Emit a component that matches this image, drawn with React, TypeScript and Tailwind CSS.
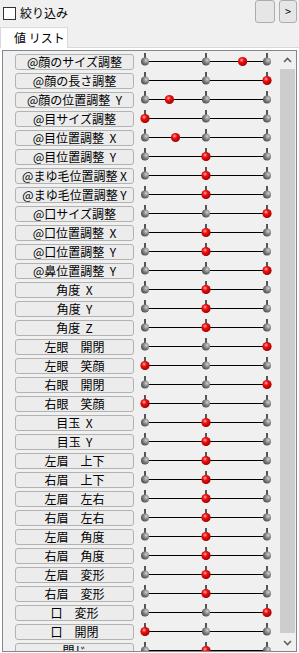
import React from "react";

type Row = { label: string; pos: number };

const rows: Row[] = [
  { label: "@顔のサイズ調整", pos: 0.8 },
  { label: "@顔の長さ調整", pos: 1 },
  { label: "@顔の位置調整  Y", pos: 0.2 },
  { label: "@目サイズ調整", pos: 0 },
  { label: "@目位置調整  X", pos: 0.25 },
  { label: "@目位置調整  Y", pos: 0.5 },
  { label: "@まゆ毛位置調整 X", pos: 0.5 },
  { label: "@まゆ毛位置調整 Y", pos: 0.5 },
  { label: "@口サイズ調整", pos: 1 },
  { label: "@口位置調整  X", pos: 0.5 },
  { label: "@口位置調整  Y", pos: 0.5 },
  { label: "@鼻位置調整  Y", pos: 1 },
  { label: "角度  X", pos: 0.5 },
  { label: "角度  Y", pos: 0.5 },
  { label: "角度  Z", pos: 0.5 },
  { label: "左眼　開閉", pos: 1 },
  { label: "左眼　笑顔", pos: 0 },
  { label: "右眼　開閉", pos: 1 },
  { label: "右眼　笑顔", pos: 0 },
  { label: "目玉  X", pos: 0.5 },
  { label: "目玉  Y", pos: 0.5 },
  { label: "左眉　上下", pos: 0.5 },
  { label: "右眉　上下", pos: 0.5 },
  { label: "左眉　左右", pos: 0.5 },
  { label: "右眉　左右", pos: 0.5 },
  { label: "左眉　角度", pos: 0.5 },
  { label: "右眉　角度", pos: 0.5 },
  { label: "左眉　変形", pos: 0.5 },
  { label: "右眉　変形", pos: 0.5 },
  { label: "口　変形", pos: 1 },
  { label: "口　開閉", pos: 0 },
  { label: "閉じ", pos: 0.5 },
];

const X0 = 7;
const X1 = 129;

function Slider({ pos, id }: { pos: number; id: number }) {
  const knobs = [X0, (X0 + X1) / 2, X1];
  const vx = X0 + (X1 - X0) * pos;
  return (
    <svg width="138" height="19" viewBox="0 0 138 19" className="block">
      <defs>
        <radialGradient id={`g${id}`} cx="0.65" cy="0.35" r="0.75">
          <stop offset="0" stopColor="#d0d0d0" />
          <stop offset="0.5" stopColor="#808080" />
          <stop offset="1" stopColor="#444" />
        </radialGradient>
        <radialGradient id={`r${id}`} cx="0.4" cy="0.35" r="0.7">
          <stop offset="0" stopColor="#ffb0b0" />
          <stop offset="0.35" stopColor="#f01010" />
          <stop offset="1" stopColor="#9a0000" />
        </radialGradient>
      </defs>
      <line x1={X0} y1="9.5" x2={X1} y2="9.5" stroke="#000" strokeWidth="1" />
      {knobs.map((k) => (
        <g key={k}>
          <line x1={k} y1="1" x2={k} y2="6" stroke="#555" strokeWidth="2" />
          <circle cx={k} cy="9.5" r="4" fill={`url(#g${id})`} />
        </g>
      ))}
      <circle cx={vx} cy="9.5" r="4.6" fill={`url(#r${id})`} />
    </svg>
  );
}

export default function App() {
  return (
    <div
      className="w-[299px] h-[653px] bg-[#f0f0f0] overflow-hidden flex flex-col text-black"
      style={{ fontFamily: "'Noto Sans CJK JP', 'Liberation Sans', sans-serif" }}
    >
      <div className="h-[27px] flex items-start shrink-0">
        <label className="flex items-center gap-[4px] pl-[3px] pt-[5px] text-[12px] leading-[16px]">
          <span className="w-[13px] h-[13px] border border-[#333] bg-white" />
          絞り込み
        </label>
        <div className="ml-auto flex gap-[4px] pr-[2px]">
          <button className="w-[20px] h-[23px] rounded-[3px] border border-[#adadad] bg-[#e6e6e6]" />
          <button className="w-[18px] h-[23px] rounded-[3px] border border-[#adadad] bg-[#e6e6e6] text-[11px] leading-none">
            &gt;
          </button>
        </div>
      </div>

      <div className="h-[20px] flex shrink-0">
        <div className="w-[68px] h-[21px] bg-white border border-b-0 border-[#d9d9d9] text-[12px] leading-[19px] pl-[13px] z-10">
          値 リスト
        </div>
      </div>

      <div className="flex-1 bg-white border-t border-[#d9d9d9] pt-[2px] px-[2px] pb-[1px] flex flex-col min-h-0">
        <div className="flex-1 border border-[#828790] bg-[#f0f0f0] flex min-h-0">
          <div className="flex-1 overflow-hidden pt-[1px]">
            {rows.map((r, i) => (
              <div key={i} className="h-[19px] flex items-center">
                <div className="w-[12px] h-full" />
                <div className="w-[119px] h-[16px] rounded-[3px] border border-[#b2b2b2] bg-[#ececec] text-[12px] leading-[14px] text-center whitespace-pre">
                  {r.label}
                </div>
                <div className="ml-[4px]">
                  <Slider pos={r.pos} id={i} />
                </div>
              </div>
            ))}
          </div>
          <div className="w-[17px] bg-[#f0f0f0] flex flex-col items-center">
            <div className="h-[17px] flex items-center justify-center">
              <svg width="9" height="6" viewBox="0 0 9 6">
                <path d="M1 5 L4.5 1.5 L8 5" stroke="#606060" strokeWidth="1.6" fill="none" />
              </svg>
            </div>
            <div className="flex-1 w-[15px] bg-[#cdcdcd] mt-[1px] mb-[1px]" />
            <div className="h-[17px] flex items-center justify-center">
              <svg width="9" height="6" viewBox="0 0 9 6">
                <path d="M1 1 L4.5 4.5 L8 1" stroke="#606060" strokeWidth="1.6" fill="none" />
              </svg>
            </div>
          </div>
        </div>
      </div>
    </div>
  );
}
